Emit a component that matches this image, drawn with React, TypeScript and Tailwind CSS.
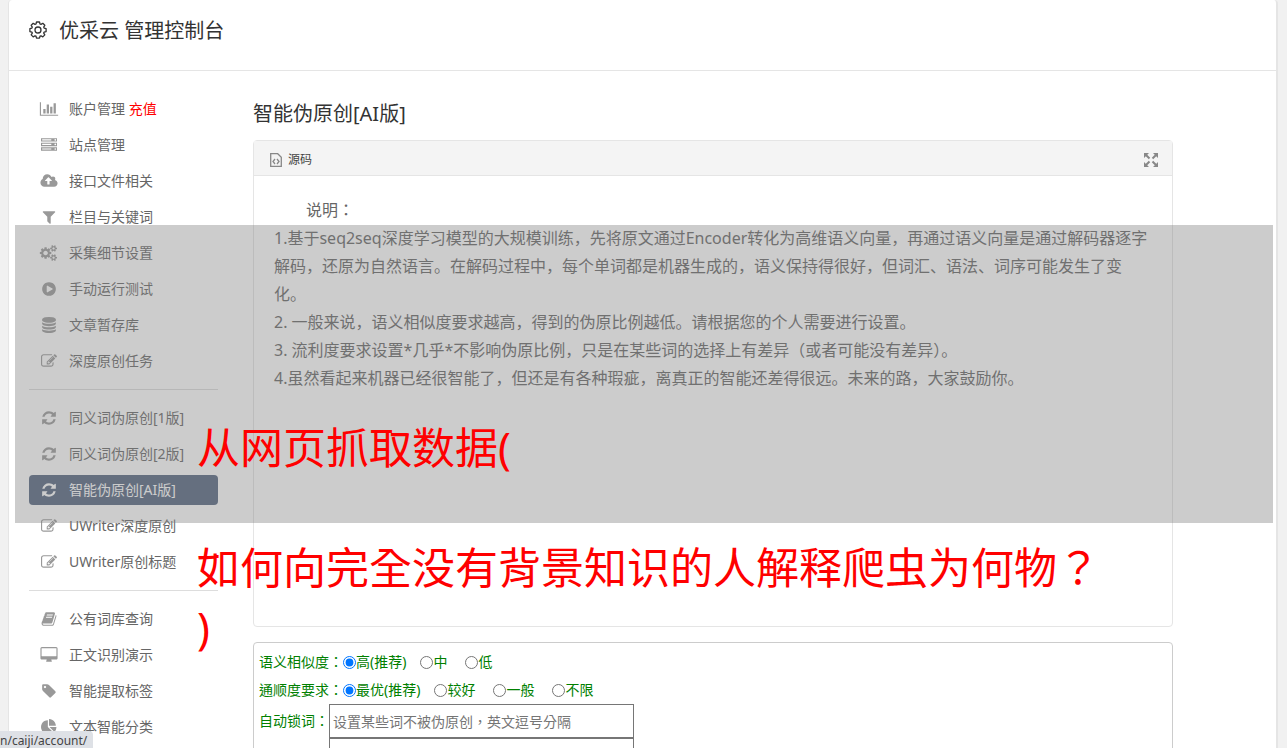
import { useState } from 'react';
import type { ReactNode } from 'react';

type IconProps = {
  path: string;
  width?: number;
};

// Glyphs share a 1792 unit em, wide ones only get a larger box
function Icon({ path, width = 1792 }: IconProps) {
  return (
    <svg viewBox={`0 0 ${width} 1792`} className="h-4 w-5 shrink-0" fill="currentColor" aria-hidden="true">
      <path d={path} />
    </svg>
  );
}

const icons = {
  chart:
    'M640 896v512h-256v-512h256zm384-512v1024h-256v-1024h256zm1024 1152v128h-2048v-1536h128v1408h1920zm-640-896v768h-256v-768h256zm384-384v1152h-256v-1152h256z',
  server:
    'M128 1408h1024v-128h-1024v128zm0-512h1024v-128h-1024v128zm1568 448q0-40-28-68t-68-28-68 28-28 68 28 68 68 28 68-28 28-68zm-1568-960h1024v-128h-1024v128zm1568 448q0-40-28-68t-68-28-68 28-28 68 28 68 68 28 68-28 28-68zm0-512q0-40-28-68t-68-28-68 28-28 68 28 68 68 28 68-28 28-68zm96 832v384h-1792v-384h1792zm0-512v384h-1792v-384h1792zm0-512v384h-1792v-384h1792z',
  cloud:
    'M1280 864q0-14-9-23l-352-352q-9-9-23-9t-23 9l-351 351q-10 12-10 24 0 14 9 23t23 9h224v352q0 13 9.5 22.5t22.5 9.5h192q13 0 22.5-9.5t9.5-22.5v-352h224q13 0 22.5-9.5t9.5-22.5zm640 288q0 159-112.5 271.5t-271.5 112.5h-1088q-185 0-316.5-131.5t-131.5-316.5q0-130 70-240t188-165q-2-30-2-43 0-212 150-362t362-150q156 0 285.5 87t188.5 231q71-62 166-62 106 0 181 75t75 181q0 76-41 138 130 31 213.5 135.5t83.5 238.5z',
  filter:
    'M1595 295q17 41-14 70l-493 493v742q0 42-39 59-13 5-25 5-27 0-45-19l-256-256q-19-19-19-45v-486l-493-493q-31-29-14-70 17-39 59-39h1280q42 0 59 39z',
  cogs:
    'M832 896q0-106-75-181t-181-75-181 75-75 181 75 181 181 75 181-75 75-181zm768 512q0-52-38-90t-90-38-90 38-38 90q0 53 37.5 90.5t90.5 37.5 90.5-37.5 37.5-90.5zm0-1024q0-52-38-90t-90-38-90 38-38 90q0 53 37.5 90.5t90.5 37.5 90.5-37.5 37.5-90.5zm-384 421v185q0 10-7 19.5t-16 10.5l-155 24q-11 35-32 76 34 48 90 115 7 11 7 20 0 12-7 19-23 30-82.5 89.5t-78.5 59.5q-11 0-21-7l-115-90q-37 19-77 31-11 108-23 155-7 24-30 24h-186q-11 0-20-7.5t-10-17.5l-23-153q-34-10-75-31l-118 89q-7 7-20 7-11 0-21-8-144-133-144-160 0-9 7-19 10-14 41-53t47-61q-23-44-35-82l-152-24q-10-1-17-9.5t-7-19.5v-185q0-10 7-19.5t16-10.5l155-24q11-35 32-76-34-48-90-115-7-11-7-20 0-12 7-20 22-30 82-89t79-59q11 0 21 7l115 90q34-18 77-32 11-108 23-154 7-24 30-24h186q11 0 20 7.5t10 17.5l23 153q34 10 75 31l118-89q8-7 20-7 11 0 21 8 144 133 144 160 0 8-7 19-12 16-42 54t-45 60q23 48 34 82l152 23q10 2 17 10.5t7 19.5zm640 533v140q0 16-149 31-12 27-30 52 51 113 51 138 0 4-4 7-122 71-124 71-8 0-46-47t-52-68q-20 2-30 2t-30-2q-14 21-52 68t-46 47q-2 0-124-71-4-3-4-7 0-25 51-138-18-25-30-52-149-15-149-31v-140q0-16 149-31 13-29 30-52-51-113-51-138 0-4 4-7 4-2 35-20t59-34 30-16q8 0 46 46.5t52 67.5q20-2 30-2t30 2q51-71 92-112l6-2q4 0 124 70 4 3 4 7 0 25-51 138 17 23 30 52 149 15 149 31zm0-1024v140q0 16-149 31-12 27-30 52 51 113 51 138 0 4-4 7-122 71-124 71-8 0-46-47t-52-68q-20 2-30 2t-30-2q-14 21-52 68t-46 47q-2 0-124-71-4-3-4-7 0-25 51-138-18-25-30-52-149-15-149-31v-140q0-16 149-31 13-29 30-52-51-113-51-138 0-4 4-7 4-2 35-20t59-34 30-16q8 0 46 46.5t52 67.5q20-2 30-2t30 2q51-71 92-112l6-2q4 0 124 70 4 3 4 7 0 25-51 138 17 23 30 52 149 15 149 31z',
  play:
    'M896 128q209 0 385.5 103t279.5 279.5 103 385.5-103 385.5-279.5 279.5-385.5 103-385.5-103-279.5-279.5-103-385.5 103-385.5 279.5-279.5 385.5-103zm384 823q32-18 32-55t-32-55l-544-320q-31-19-64-1-32 19-32 56v640q0 37 32 56 16 8 32 8 17 0 32-9z',
  database:
    'M896 768q237 0 443-43t325-127v170q0 69-103 128t-280 93.5-385 34.5-385-34.5-280-93.5-103-128v-170q119 84 325 127t443 43zm0 768q237 0 443-43t325-127v170q0 69-103 128t-280 93.5-385 34.5-385-34.5-280-93.5-103-128v-170q119 84 325 127t443 43zm0-384q237 0 443-43t325-127v170q0 69-103 128t-280 93.5-385 34.5-385-34.5-280-93.5-103-128v-170q119 84 325 127t443 43zm0-1152q208 0 385 34.5t280 93.5 103 128v128q0 69-103 128t-280 93.5-385 34.5-385-34.5-280-93.5-103-128v-128q0-69 103-128t280-93.5 385-34.5z',
  edit:
    'M888 1184l116-116-152-152-116 116v56h96v96h56zm440-720q-16-16-33 1l-350 350q-17 17-1 33t33-1l350-350q17-17 1-33zm80 594v190q0 119-84.5 203.5t-203.5 84.5h-832q-119 0-203.5-84.5t-84.5-203.5v-832q0-119 84.5-203.5t203.5-84.5h832q63 0 117 25 15 7 18 23 3 17-9 29l-49 49q-14 14-32 8-23-6-45-6h-832q-66 0-113 47t-47 113v832q0 66 47 113t113 47h832q66 0 113-47t47-113v-126q0-13 9-22l64-64q15-15 35-7t20 29zm-96-738l288 288-672 672h-288v-288zm444 132l-92 92-288-288 92-92q28-28 68-28t68 28l152 152q28 28 28 68t-28 68z',
  refresh:
    'M1639 1056q0 5-1 7-64 268-268 434.5t-478 166.5q-146 0-282.5-55t-243.5-157l-129 129q-19 19-45 19t-45-19-19-45v-448q0-26 19-45t45-19h448q26 0 45 19t19 45-19 45l-137 137q71 66 161 102t187 36q134 0 250-65t186-179q11-17 53-117 8-23 30-23h192q13 0 22.5 9.5t9.5 22.5zm25-800v448q0 26-19 45t-45 19h-448q-26 0-45-19t-19-45 19-45l138-138q-148-137-349-137-134 0-250 65t-186 179q-11 17-53 117-8 23-30 23h-199q-13 0-22.5-9.5t-9.5-22.5v-7q65-268 270-434.5t480-166.5q146 0 284 55.5t245 156.500l130-129q19-19 45-19t45 19 19 45z',
  book:
    'M1703 478q40 57 18 129l-275 906q-19 64-76.5 107.5t-122.5 43.5h-923q-77 0-148.5-53.5t-99.5-131.5q-24-67-2-127 0-4 3-27t4-37q1-8-3-21.5t-3-19.5q2-11 8-21t16.5-23.5 16.5-23.5q23-38 45-91.5t30-91.5q3-10 .5-30t-.5-28q3-11 17-28t17-23q21-36 42-92t25-90q1-9-2.5-32t.5-28q4-13 22-30.5t22-22.5q19-26 42.5-84.5t27.5-96.5q1-8-3-25.5t-2-26.5q2-8 9-18t18-23 17-21q8-12 16.5-30.5t15-35 16-36 19.5-32 26.5-23.5 36-11.5 47.5 5.5l-1 3q38-9 51-9h761q74 0 114 56t18 130l-274 906q-36 119-71.5 153.5t-128.5 34.5h-869q-27 0-38 15-11 16-1 43 24 70 144 70h923q29 0 56-15.5t35-41.5l300-987q7-22 5-57 38 15 59 43zm-1064 2q-4 13 2 22.5t20 9.5h608q13 0 25.5-9.5t16.5-22.5l21-64q4-13-2-22.5t-20-9.5h-608q-13 0-25.5 9.5t-16.5 22.5zm-83 256q-4 13 2 22.5t20 9.5h608q13 0 25.5-9.5t16.5-22.5l21-64q4-13-2-22.5t-20-9.5h-608q-13 0-25.5 9.5t-16.5 22.5z',
  desktop:
    'M1856 992v-832q0-13-9.5-22.5t-22.5-9.5h-1600q-13 0-22.5 9.5t-9.5 22.5v832q0 13 9.5 22.5t22.5 9.5h1600q13 0 22.5-9.5t9.5-22.5zm128-832v1088q0 66-47 113t-113 47h-544q0 37 16 77.5t32 71 16 43.5q0 26-19 45t-45 19h-512q-26 0-45-19t-19-45q0-14 16-44t32-70 16-78h-544q-66 0-113-47t-47-113v-1088q0-66 47-113t113-47h1600q66 0 113 47t47 113z',
  tag:
    'M576 448q0-53-37.5-90.5t-90.5-37.5-90.5 37.5-37.5 90.5 37.5 90.5 90.5 37.5 90.5-37.5 37.5-90.5zm1067 576q0 53-37 90l-491 492q-39 37-91 37-53 0-90-37l-715-716q-38-37-64.5-101t-26.5-117v-416q0-52 38-90t90-38h416q53 0 117 26.5t102 64.5l715 714q37 39 37 91z',
  pie:
    'M768 890l546 546q-106 108-247.5 168t-298.5 60q-209 0-385.5-103t-279.5-279.5-103-385.5 103-385.5 279.5-279.5 385.5-103v762zm187 6h773q0 157-60 298.5t-168 247.5zm709-128h-768v-768q209 0 385.5 103t279.5 279.5 103 385.5z',
};

type NavItem = {
  label: string;
  icon: string;
  width?: number;
  extra?: string;
  active?: boolean;
};

const navGroups: NavItem[][] = [
  [
    { label: '账户管理', icon: icons.chart, width: 2048, extra: '充值' },
    { label: '站点管理', icon: icons.server },
    { label: '接口文件相关', icon: icons.cloud, width: 1920 },
    { label: '栏目与关键词', icon: icons.filter },
    { label: '采集细节设置', icon: icons.cogs, width: 1920 },
    { label: '手动运行测试', icon: icons.play },
    { label: '文章暂存库', icon: icons.database },
    { label: '深度原创任务', icon: icons.edit },
  ],
  [
    { label: '同义词伪原创[1版]', icon: icons.refresh },
    { label: '同义词伪原创[2版]', icon: icons.refresh },
    { label: '智能伪原创[AI版]', icon: icons.refresh, active: true },
    { label: 'UWriter深度原创', icon: icons.edit },
    { label: 'UWriter原创标题', icon: icons.edit },
  ],
  [
    { label: '公有词库查询', icon: icons.book },
    { label: '正文识别演示', icon: icons.desktop, width: 2048 },
    { label: '智能提取标签', icon: icons.tag },
    { label: '文本智能分类', icon: icons.pie },
  ],
];

function NavLink({ label, icon, width, extra, active }: NavItem) {
  return (
    <a
      href="#"
      className={`flex h-[30px] items-center gap-2.5 rounded-sm px-2.5 text-sm ${
        active ? 'bg-[#54657f] text-white' : 'text-[#666]'
      }`}
    >
      <span className={active ? 'text-white' : 'text-[#999]'}>
        <Icon path={icon} width={width} />
      </span>
      <span>
        {label}
        {extra && <span className="text-[#f00]"> {extra}</span>}
      </span>
    </a>
  );
}

function Sidebar() {
  return (
    <nav className="w-[189px] shrink-0">
      {navGroups.map((group, i) => (
        <div key={i} className={i > 0 ? 'mt-[13px] border-t border-[#ddd] pt-[13px]' : ''}>
          <div className="flex flex-col gap-1.5">
            {group.map((item) => (
              <NavLink key={item.label} {...item} />
            ))}
          </div>
        </div>
      ))}
    </nav>
  );
}

function SourcePanel({ children }: { children: ReactNode }) {
  return (
    <section className="flex min-h-[487px] flex-col rounded-sm border border-[#e5e5e5]">
      <div className="flex h-[35px] items-center justify-between border-b border-[#e5e5e5] bg-[#f4f4f4] pt-1 pr-3.5 pl-4">
        <button type="button" className="flex items-center gap-1.5 text-xs text-[#444]">
          <svg viewBox="0 0 12 14" className="h-3.5 w-3" fill="none" stroke="#888" aria-hidden="true">
            <path strokeWidth="1.3" d="M.7.7h7l3.600 3.600v9H.7z" />
            <path strokeWidth="1.3" d="M5 6 3 8.500l2 2.500M7 6l2 2.500L7 11" />
          </svg>
          源码
        </button>
        <button type="button" aria-label="全屏">
          <svg viewBox="0 0 14 14" className="size-3.5" fill="#888" stroke="#888" aria-hidden="true">
            <path stroke="none" d="M0 0h5L0 5zM14 0v5L9 0zM0 14V9l5 5zM14 14H9l5-5z" />
            <path strokeWidth="2" d="m2 2 3.500 3.500M12 2 8.500 5.500M2 12l3.500-3.500M12 12 8.500 8.500" />
          </svg>
        </button>
      </div>
      <div className="p-5 text-base leading-7 text-[#666]">{children}</div>
    </section>
  );
}

type RadioRowProps = {
  title: string;
  name: string;
  options: string[];
};

function RadioRow({ title, name, options }: RadioRowProps) {
  const [value, setValue] = useState(options[0]);
  return (
    <fieldset className="flex h-7 items-center">
      <legend className="contents">{title}</legend>
      {options.map((option, i) => (
        <label key={option} className={`flex items-center ${i === 0 ? '' : i === 1 ? 'ml-3.5' : 'ml-[18px]'}`}>
          <input
            type="radio"
            name={name}
            checked={value === option}
            onChange={() => setValue(option)}
            className="size-[13px]"
          />
          {option}
        </label>
      ))}
    </fieldset>
  );
}

function SettingsForm() {
  return (
    <form className="mt-[15px] rounded-sm border border-[#ccc] px-[5px] pt-[5px] font-['Noto_Sans','Noto_Sans_CJK_TC',sans-serif] text-sm text-[green]">
      <RadioRow title="语义相似度：" name="similarity" options={['高(推荐)', '中', '低']} />
      <RadioRow title="通顺度要求：" name="fluency" options={['最优(推荐)', '较好', '一般', '不限']} />
      <div className="flex items-center">
        <label htmlFor="lock" className="w-[70px] whitespace-nowrap">
          自动锁词：
        </label>
        <input
          id="lock"
          type="text"
          placeholder="设置某些词不被伪原创，英文逗号分隔"
          className="h-[34px] w-[305px] border border-[#767676] px-[3px] placeholder:text-[#757575]"
        />
      </div>
      <textarea aria-label="锁定词" className="ml-[70px] block h-20 w-[305px] resize-none border border-[#767676]" />
    </form>
  );
}

export default function App() {
  return (
    <div className="relative h-screen overflow-hidden bg-[#f1f1f1] pr-[9px] pl-2 font-['Noto_Sans','Noto_Sans_CJK_SC',sans-serif]">
      <div className="min-h-full rounded-t border-r-2 border-l border-[#e5e5e5] bg-white">
        <header className="flex h-[71px] items-start gap-3 border-b border-[#e5e5e5] px-5 pt-[17px] text-[#333]">
          <svg
            viewBox="0 0 18 18"
            className="mt-1 size-[18px]"
            fill="none"
            stroke="currentColor"
            strokeWidth="1.3"
            strokeLinejoin="round"
            aria-hidden="true"
          >
            <path d="m7.500 1 3 0 .5 2 1 .4 1.800-1.100 2 2-1.100 1.800.4 1 2 .5v3l-2 .5-.4 1 1.100 1.800-2 2-1.800-1.100-1 .4-.5 2h-3l-.5-2-1-.4-1.800 1.100-2-2 1.100-1.800-.4-1-2-.5v-3l2-.5.4-1-1.100-1.800 2-2 1.800 1.100 1-.4z" />
            <circle cx="9" cy="9" r="3" />
          </svg>
          <h1 className="text-xl leading-7">优采云 管理控制台</h1>
        </header>
        <div className="flex gap-[35px] px-5 pt-[23px]">
          <Sidebar />
          <main className="max-w-[920px] flex-1">
            <h2 className="mt-1.5 mb-3 text-xl leading-7 text-[#333]">智能伪原创[AI版]</h2>
            <SourcePanel>
              <p className="indent-8 font-['Noto_Sans','Noto_Sans_CJK_TC',sans-serif]">说明：</p>
              <p>
                1.基于seq2seq深度学习模型的大规模训练，先将原文通过Encoder转化为高维语义向量，再通过语义向量是通过解码器逐字解码，还原为自然语言。在解码过程中，每个单词都是机器生成的，语义保持得很好，但词汇、语法、词序可能发生了变化。
              </p>
              <p>2. 一般来说，语义相似度要求越高，得到的伪原比例越低。请根据您的个人需要进行设置。</p>
              <p>3. 流利度要求设置*几乎*不影响伪原比例，只是在某些词的选择上有差异（或者可能没有差异）。</p>
              <p>4.虽然看起来机器已经很智能了，但还是有各种瑕疵，离真正的智能还差得很远。未来的路，大家鼓励你。</p>
            </SourcePanel>
            <SettingsForm />
          </main>
        </div>
      </div>

      <div className="absolute top-[225px] right-3.5 left-[15px] h-[298px] bg-[#808080]/40 px-[182px] pt-[193px] font-['Noto_Sans','Noto_Sans_CJK_TC',sans-serif] text-[43px] leading-[60px] whitespace-nowrap text-[#f00]">
        <p>从网页抓取数据(</p>
        <p className="mt-[60px]">如何向完全没有背景知识的人解释爬虫为何物？</p>
        <p>)</p>
      </div>

      <div className="absolute bottom-0 left-0 flex h-[17px] items-end rounded-tr bg-[#dee1e6] pr-1.5 text-xs leading-3.5 text-[#444]">
        n/caiji/account/
      </div>
    </div>
  );
}
